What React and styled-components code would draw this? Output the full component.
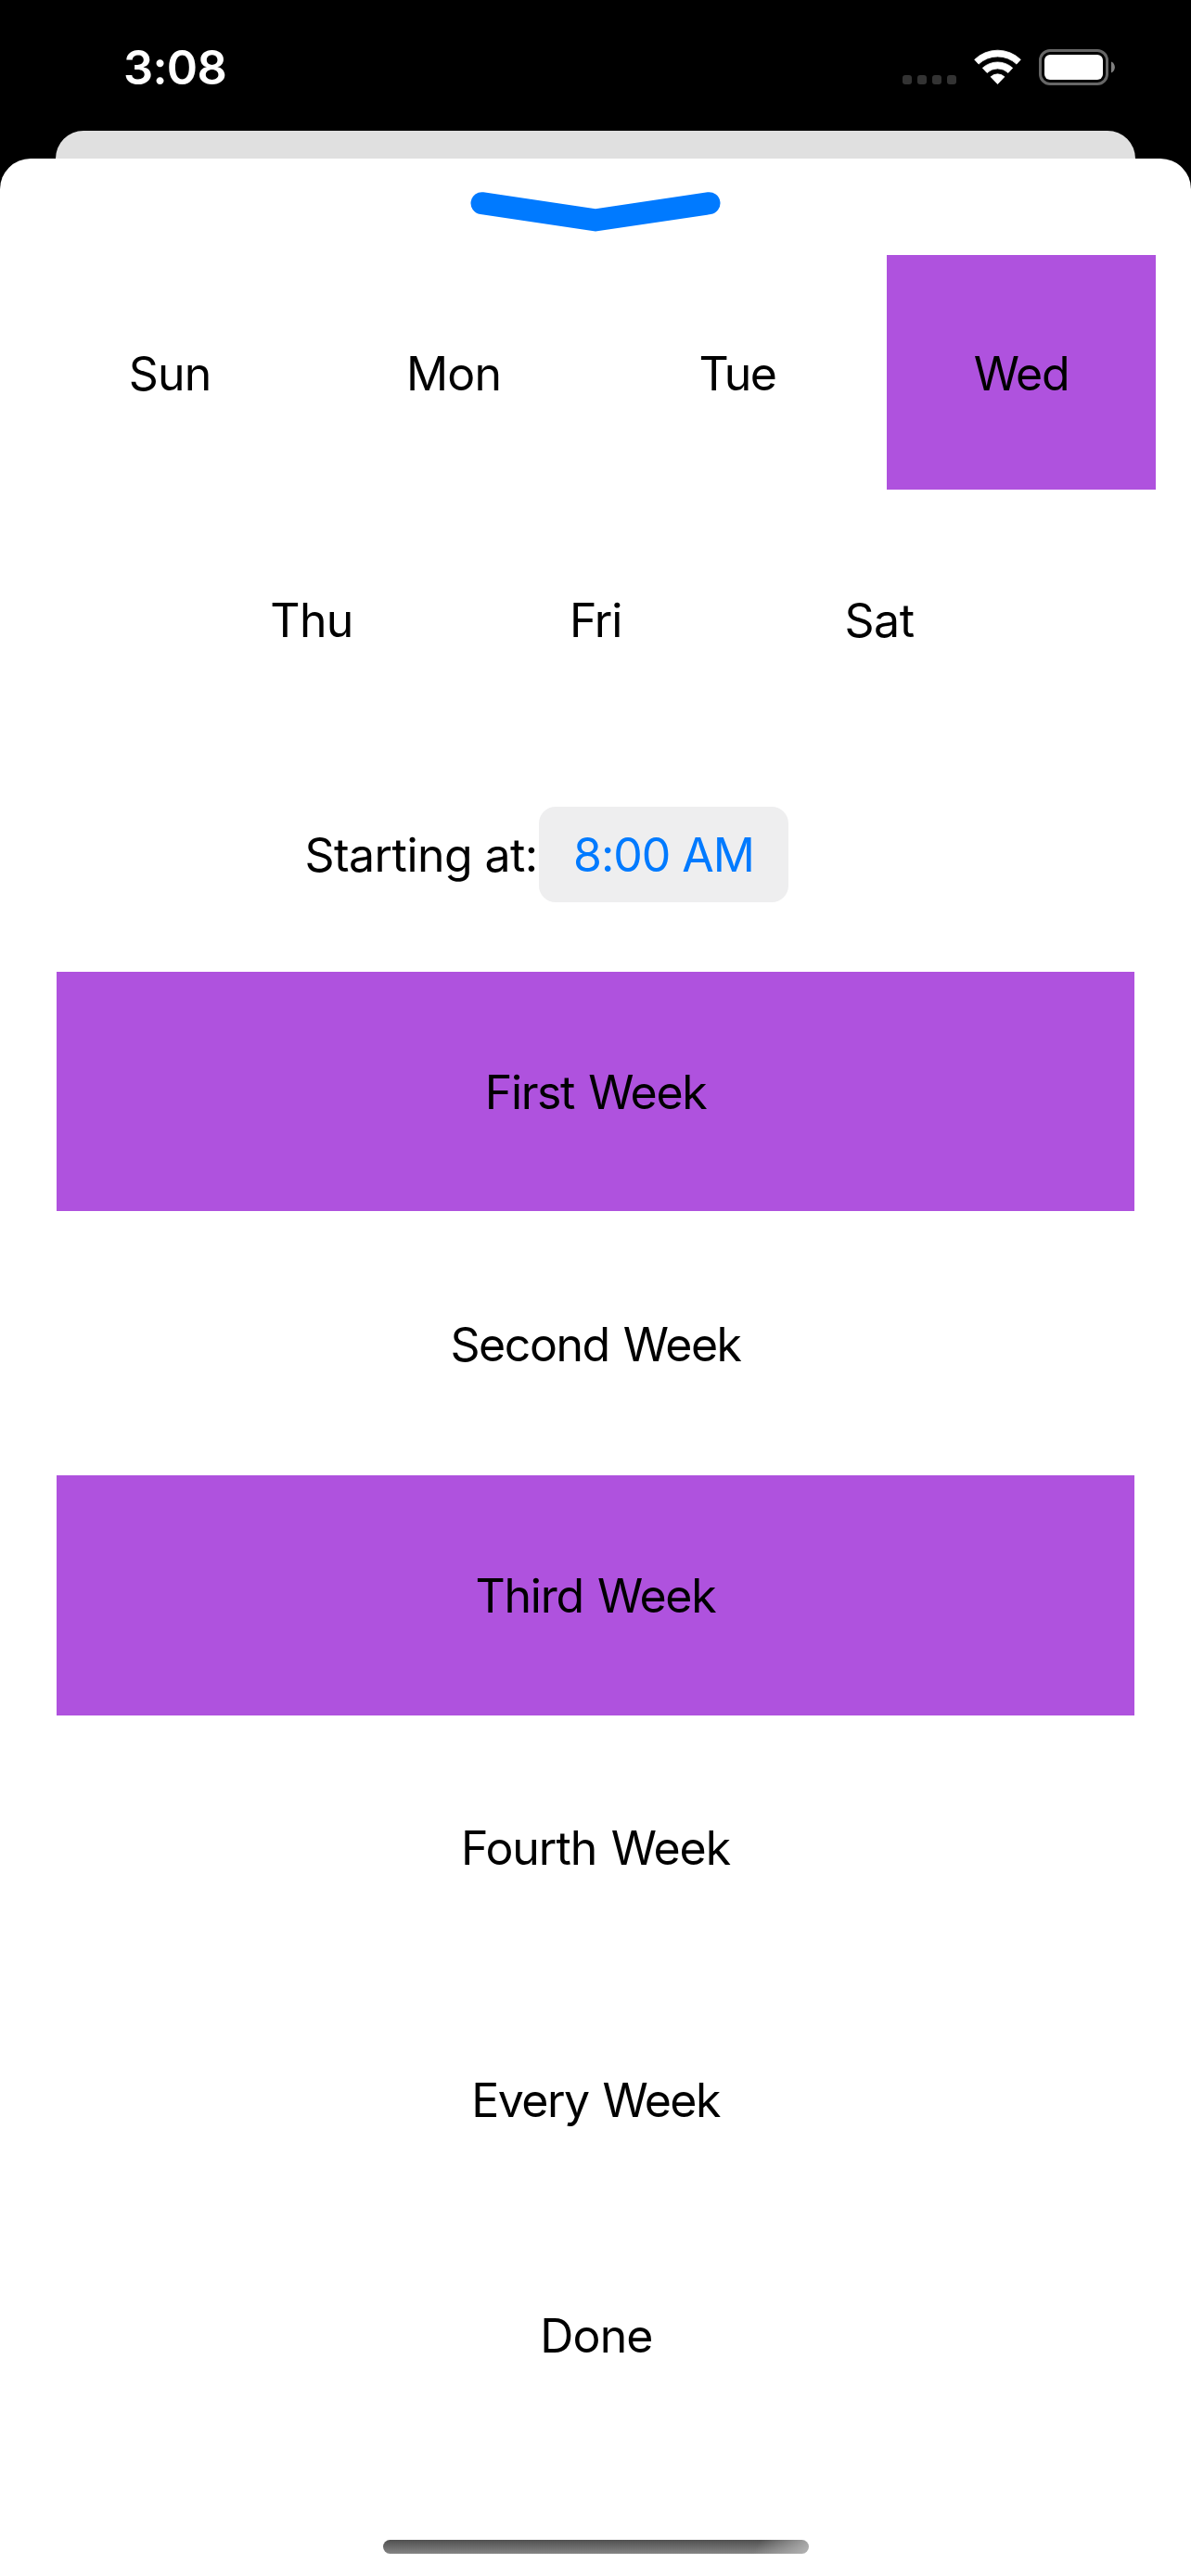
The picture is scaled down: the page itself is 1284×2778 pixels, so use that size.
import React, { useState } from "react";
import styled, { createGlobalStyle } from "styled-components";

const PURPLE = "#af52de";
const BLUE = "#007aff";

const GlobalStyle = createGlobalStyle`
  body {
    margin: 0;
    background: #000;
    font-family: Inter, "Liberation Sans", sans-serif;
  }
`;

const Screen = styled.main`
  display: flex;
  flex-direction: column;
  width: 1284px;
  height: 2778px;
  overflow: hidden;
  background: #000;
`;

const StatusBar = styled.header`
  display: flex;
  justify-content: space-between;
  box-sizing: border-box;
  height: 141px;
  padding: 53px 82px 0 133px;
`;

const Clock = styled.time`
  height: 39px;
  color: #fff;
  font-size: 50.5px;
  font-weight: 560;
  line-height: 39px;
  letter-spacing: -0.7px;
`;

const StatusIcons = styled.div`
  display: flex;
  align-items: flex-start;
`;

const SignalDots = styled.div`
  display: flex;
  gap: 6px;
  margin: 28px 19px 0 0;
`;

const Dot = styled.span`
  width: 10px;
  height: 10px;
  border-radius: 3px;
  background: #333;
`;

const WifiIcon = styled.svg`
  width: 51px;
  height: 39px;
  margin-right: 19px;
`;

const BatteryIcon = styled.svg`
  width: 82px;
  height: 39px;
`;

const BackCard = styled.div`
  flex: none;
  height: 30px;
  margin: 0 60px;
  border-radius: 30px 30px 0 0;
  background: #e0e0e0;
`;

const Sheet = styled.section`
  display: flex;
  flex: 1;
  flex-direction: column;
  border-radius: 33px 33px 0 0;
  background: #fff;
`;

const Grabber = styled.svg`
  display: block;
  flex: none;
  width: 270px;
  height: 44px;
  margin: 36px auto 24px;
`;

const DayGrid = styled.div`
  display: flex;
  flex-direction: column;
  gap: 13px;
`;

const DayRow = styled.div`
  display: flex;
  justify-content: center;
  gap: 16px;
`;

const Option = styled.button`
  display: flex;
  align-items: center;
  justify-content: center;
  box-sizing: border-box;
  margin: 0;
  padding: 2px 0 0;
  border: 0;
  background: ${(p) => (p.$selected ? PURPLE : "transparent")};
  color: #000;
  font: 400 50px/60px Inter, "Liberation Sans", sans-serif;
  letter-spacing: ${(p) => p.$tracking}px;
`;

const DayOption = styled(Option)`
  width: 290px;
  height: 253px;
`;

const WeekOption = styled(Option)`
  width: 100%;
  height: 258.4px;
  word-spacing: 2.5px;
`;

const DoneButton = styled(Option)`
  align-self: center;
  width: 400px;
  height: 226px;
  margin-top: 12px;
  padding-left: 2px;
`;

const TimeRow = styled.div`
  display: flex;
  align-items: center;
  height: 103px;
  margin: 76px 0 75px;
  padding-left: 328.5px;
`;

const TimeLabel = styled.span`
  width: 252.5px;
  font-size: 50px;
  line-height: 60px;
  letter-spacing: -0.56px;
  white-space: nowrap;
`;

const TimePill = styled.button`
  width: 269px;
  height: 103px;
  padding: 0;
  border: 0;
  border-radius: 18px;
  background: #eeeeef;
  color: ${BLUE};
  font: 400 50px/60px Inter, "Liberation Sans", sans-serif;
  letter-spacing: -1.03px;
`;

const WeekList = styled.div`
  display: flex;
  flex-direction: column;
  gap: 13.2px;
  margin: 0 61px;
`;

const HomeIndicator = styled.div`
  width: 459px;
  height: 15px;
  margin: auto auto 24px;
  border-radius: 8px;
  background:
    linear-gradient(120deg, rgba(185, 185, 185, 0) 87%, rgba(185, 185, 185, 0.9) 100%),
    linear-gradient(#505050, #848484);
`;

const DAY_ROWS = [
  [
    { name: "Sun", tracking: -0.82 },
    { name: "Mon", tracking: -0.82 },
    { name: "Tue", tracking: -1.5 },
    { name: "Wed", tracking: -1.3 },
  ],
  [
    { name: "Thu", tracking: -0.67 },
    { name: "Fri", tracking: -1.2 },
    { name: "Sat", tracking: -0.5 },
  ],
];

const WEEKS = [
  { name: "First Week", tracking: -1.38 },
  { name: "Second Week", tracking: -1.43 },
  { name: "Third Week", tracking: -1.28 },
  { name: "Fourth Week", tracking: -1.05 },
  { name: "Every Week", tracking: -1.55 },
];

function toggled(list, name) {
  return list.includes(name) ? list.filter((n) => n !== name) : [...list, name];
}

export default function App() {
  const [days, setDays] = useState(["Wed"]);
  const [weeks, setWeeks] = useState(["First Week", "Third Week"]);

  return (
    <Screen>
      <GlobalStyle />
      <StatusBar>
        <Clock>3:08</Clock>
        <StatusIcons>
          <SignalDots>
            <Dot />
            <Dot />
            <Dot />
            <Dot />
          </SignalDots>
          <WifiIcon viewBox="0 0 51 39" fill="#fff" stroke="#fff" strokeWidth="0.8" strokeLinejoin="round">
            <path d="M0.7 11.3A35.5 35.5 0 0 1 50.3 11.3L45.9 16.1A29.7 29.7 0 0 0 5.1 16.1Z" />
            <path d="M9.3 20.3A24 24 0 0 1 41.7 20.3L36.9 25.5A16.5 16.5 0 0 0 14.1 25.5Z" />
            <path d="M18.1 29.8A10.8 10.8 0 0 1 32.9 29.8L25.5 37.6Z" />
          </WifiIcon>
          <BatteryIcon viewBox="0 0 82 39">
            <rect x="1.5" y="1.5" width="72" height="36" rx="10.5" fill="none" stroke="#666" strokeWidth="3" />
            <rect x="6" y="6" width="63" height="27" rx="6" fill="#fff" />
            <path d="M78 13.5C83.2 15.5 83.2 23.5 78 25.5Z" fill="#808080" />
          </BatteryIcon>
        </StatusIcons>
      </StatusBar>
      <BackCard />
      <Sheet>
        <Grabber viewBox="0 0 270 44" fill="none">
          <path
            d="M12.5 12.2L135 30.3L257.5 12.2"
            stroke={BLUE}
            strokeWidth="24"
            strokeLinecap="round"
            strokeLinejoin="miter"
          />
        </Grabber>
        <DayGrid>
          {DAY_ROWS.map((row) => (
            <DayRow key={row[0].name}>
              {row.map(({ name, tracking }) => (
                <DayOption
                  key={name}
                  $selected={days.includes(name)}
                  $tracking={tracking}
                  onClick={() => setDays(toggled(days, name))}
                >
                  {name}
                </DayOption>
              ))}
            </DayRow>
          ))}
        </DayGrid>
        <TimeRow>
          <TimeLabel>Starting at:</TimeLabel>
          <TimePill>8:00 AM</TimePill>
        </TimeRow>
        <WeekList>
          {WEEKS.map(({ name, tracking }) => (
            <WeekOption
              key={name}
              $selected={weeks.includes(name)}
              $tracking={tracking}
              onClick={() => setWeeks(toggled(weeks, name))}
            >
              {name}
            </WeekOption>
          ))}
        </WeekList>
        <DoneButton $tracking={-0.87}>Done</DoneButton>
        <HomeIndicator />
      </Sheet>
    </Screen>
  );
}
